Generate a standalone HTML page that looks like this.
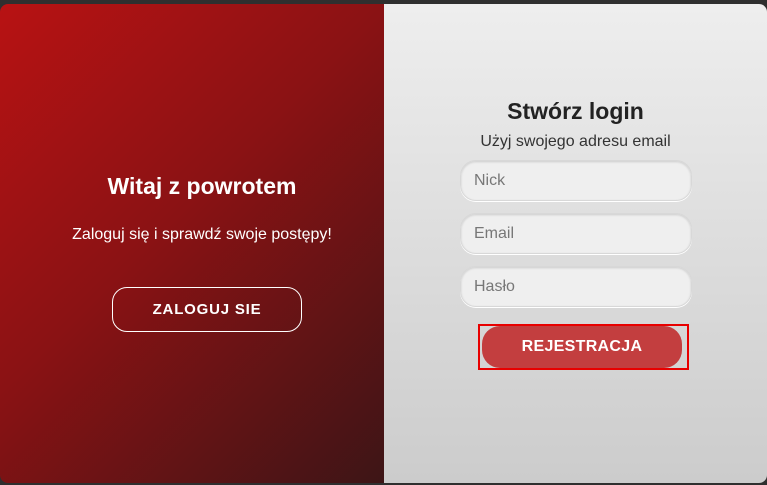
<!DOCTYPE html>
<html><head><meta charset="utf-8"><style>
html,body{margin:0;padding:0;width:767px;height:485px;background:#2f2f2f;overflow:hidden;font-family:"Liberation Sans",sans-serif}
.card{position:absolute;left:0;top:4px;width:767px;height:479px;border-radius:8px;overflow:hidden;display:flex}
.left{width:384px;height:100%;background:linear-gradient(135deg,#b81213 0%,#8a1214 45%,#3d1516 100%);color:#fff;text-align:center;position:relative}
.right{flex:1;background:linear-gradient(180deg,#eeeeee 0%,#cccccc 100%);position:relative}
.left h2{position:absolute;top:169px;left:10px;width:100%;margin:0;font-size:23px;font-weight:bold}
.left p{position:absolute;top:222px;left:10px;width:100%;margin:0;font-size:16px}
.btnL{position:absolute;left:112px;top:283px;width:190px;height:45px;border:1px solid #fff;border-radius:15px;box-sizing:border-box;font-weight:bold;font-size:15px;letter-spacing:0.8px;line-height:43px;color:#fff}
.right h2{position:absolute;top:94px;left:0;width:100%;text-align:center;margin:0;font-size:23px;font-weight:bold;color:#222}
.sub{position:absolute;top:129px;left:0;width:100%;text-align:center;font-size:16px;color:#333}
.in{position:absolute;left:76px;width:232px;height:41px;border-radius:16px;background:#efefef;border:1px solid #d8d8d8;box-shadow:inset 0 1px 2px rgba(0,0,0,.15),0 1px 0 #fff;box-sizing:border-box;padding-left:13px;font-size:16px;line-height:39px;color:#777}
.reg{position:absolute;left:94px;top:320px;width:211px;height:46px;border:2px solid #e80000;box-sizing:border-box}
.reg div{position:absolute;left:2px;top:0;width:200px;height:42px;border-radius:18px;background:#c33e3f;color:#fff;font-weight:bold;font-size:16px;letter-spacing:0.3px;text-align:center;line-height:42px}
</style></head><body>
<div class="card">
<div class="left">
<h2>Witaj z powrotem</h2>
<p>Zaloguj się i sprawdź swoje postępy!</p>
<div class="btnL">ZALOGUJ SIE</div>
</div>
<div class="right">
<h2>Stwórz login</h2>
<div class="sub">Użyj swojego adresu email</div>
<div class="in" style="top:156px">Nick</div>
<div class="in" style="top:209px">Email</div>
<div class="in" style="top:262px">Hasło</div>
<div class="reg"><div>REJESTRACJA</div></div>
</div>
</div>
</body></html>
